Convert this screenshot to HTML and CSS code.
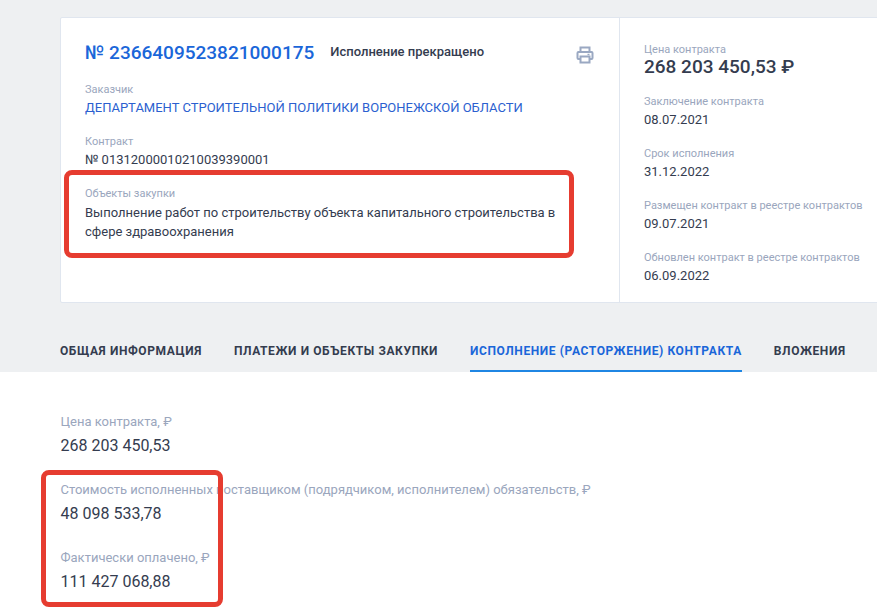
FILE: index.html
```html
<!DOCTYPE html>
<html lang="ru">
<head>
<meta charset="utf-8">
<title>Контракт</title>
<link rel="stylesheet" href="styles.css">
</head>
<body>
<div class="page">
  <header class="top">
    <section class="card">
      <div class="main">
        <div class="head">
          <h1 class="number">№ 2366409523821000175</h1>
          <span class="status">Исполнение прекращено</span>
          <svg class="print" width="18" height="18" viewBox="0 0 18 18" fill="none" stroke="#9aa8c2" stroke-width="2">
            <path d="M4.5 6V1.5h9V6"/>
            <rect x="1.5" y="6" width="15" height="7" rx="1"/>
            <rect x="4.5" y="10.5" width="9" height="6" fill="#fff"/>
            <path d="M11.5 8.5h2" stroke-width="1.5"/>
          </svg>
        </div>
        <div class="field customer">
          <div class="label">Заказчик</div>
          <a class="value link">ДЕПАРТАМЕНТ СТРОИТЕЛЬНОЙ ПОЛИТИКИ ВОРОНЕЖСКОЙ ОБЛАСТИ</a>
        </div>
        <div class="field contract">
          <div class="label">Контракт</div>
          <div class="value">№ 01312000010210039390001</div>
        </div>
        <div class="field objects">
          <div class="label">Объекты закупки</div>
          <div class="value wrap">Выполнение работ по строительству объекта капитального строительства в сфере здравоохранения</div>
        </div>
      </div>
      <aside class="side">
        <div class="fact first">
          <div class="label">Цена контракта</div>
          <div class="price">268 203 450,53 ₽</div>
        </div>
        <div class="fact">
          <div class="label">Заключение контракта</div>
          <div class="value">08.07.2021</div>
        </div>
        <div class="fact">
          <div class="label">Срок исполнения</div>
          <div class="value">31.12.2022</div>
        </div>
        <div class="fact">
          <div class="label">Размещен контракт в реестре контрактов</div>
          <div class="value">09.07.2021</div>
        </div>
        <div class="fact">
          <div class="label">Обновлен контракт в реестре контрактов</div>
          <div class="value">06.09.2022</div>
        </div>
      </aside>
    </section>
    <nav class="tabs">
      <a class="tab">ОБЩАЯ ИНФОРМАЦИЯ</a>
      <a class="tab">ПЛАТЕЖИ И ОБЪЕКТЫ ЗАКУПКИ</a>
      <a class="tab active">ИСПОЛНЕНИЕ (РАСТОРЖЕНИЕ) КОНТРАКТА</a>
      <a class="tab">ВЛОЖЕНИЯ</a>
    </nav>
  </header>
  <main class="content">
    <div class="sum">
      <div class="sum-label">Цена контракта, ₽</div>
      <div class="sum-value">268 203 450,53</div>
    </div>
    <div class="sum">
      <div class="sum-label">Стоимость исполненных поставщиком (подрядчиком, исполнителем) обязательств, ₽</div>
      <div class="sum-value">48 098 533,78</div>
    </div>
    <div class="sum">
      <div class="sum-label">Фактически оплачено, ₽</div>
      <div class="sum-value">111 427 068,88</div>
    </div>
  </main>
  <div class="mark mark-objects"></div>
  <div class="mark mark-sums"></div>
</div>
</body>
</html>
```
FILE: styles.css
```css
* { box-sizing: border-box; }
html, body { margin: 0; padding: 0; height: 100%; }
body { font-family: Roboto, "Liberation Sans", sans-serif; color: #343c4f; background: #fff; overflow: hidden; }
.page { position: relative; width: 877px; height: 608px; overflow: hidden; }
.top { background: #eef0f2; height: 372px; padding: 17px 0 0 60px; }
.card { display: flex; width: 900px; height: 286px; background: #fff; border: 1px solid #e0e6ef; border-radius: 2px; }
.main { width: 559px; padding: 23px 24px 0 24px; border-right: 1px solid #e0e6ef; flex: none; }
.head { display: flex; align-items: center; height: 24px; }
.number { margin: 0; font-size: 19px; line-height: 24px; font-weight: 500; color: #1a66d9; }
.status { margin-left: 16px; font-size: 13px; font-weight: 500; color: #343c4f; margin-top: -3px; }
.print { margin-left: auto; margin-right: 1px; margin-top: 3px; }
.label { font-size: 11px; line-height: 14px; color: #9aa6bd; }
.value { font-size: 13px; line-height: 18px; color: #343c4f; }
.link { display: block; color: #2b5fd0; }
.customer { margin-top: 18px; }
.contract { margin-top: 18px; }
.objects { margin-top: 18px; }
.field .value { margin-top: 2px; }
.field .wrap { line-height: 19px; margin-top: 2px; }
.side { padding: 25px 0 0 24px; }
.fact { margin-top: 18px; }
.fact.first { margin-top: 0; }
.fact .value { margin-top: 2px; }
.price { font-size: 19px; line-height: 20px; font-weight: 500; color: #343c4f; }
.tabs { display: flex; gap: 32px; margin-top: 28px; height: 41px; }
.tab { font-size: 12px; font-weight: 700; letter-spacing: 0.6px; line-height: 14px; color: #343c4f; padding-top: 13px; white-space: nowrap; }
.tab.active { color: #1a66d9; border-bottom: 2px solid #1f86e3; }
.content { padding: 41px 0 0 60.5px; }
.sum { margin-bottom: 24px; }
.sum-label { font-size: 13px; line-height: 18px; color: #9aa6bd; }
.sum-value { font-size: 16px; line-height: 22px; margin-top: 4px; color: #343c4f; }
.mark { position: absolute; border: 5px solid #e63c30; border-radius: 8px; }
.mark-objects { left: 64px; top: 170px; width: 510px; height: 88px; }
.mark-sums { left: 41px; top: 470px; width: 182px; height: 137px; }
```
